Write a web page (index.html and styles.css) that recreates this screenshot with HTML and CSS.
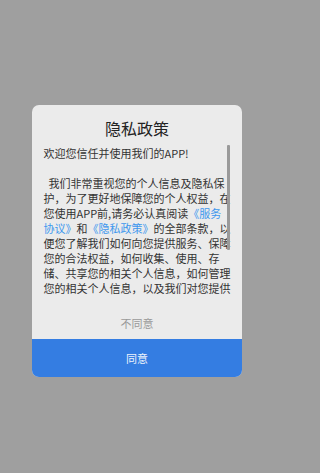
FILE: index.html
```html
<!DOCTYPE html>
<html lang="zh-CN">
<head>
<meta charset="utf-8">
<title>隐私政策</title>
<link rel="stylesheet" href="styles.css">
</head>
<body>
<div class="dialog">
  <h1 class="dialog-title">隐私政策</h1>
  <div class="dialog-body">
    <div class="scroll-content">
      <p class="welcome">欢迎您信任并使用我们的APP!</p>
      <p class="policy">我们非常重视您的个人信息及隐私保护，为了更好地保障您的个人权益，在您使用APP前,请务必认真阅读<a class="link">《服务协议》</a>和<a class="link">《隐私政策》</a>的全部条款，以便您了解我们如何向您提供服务、保障您的合法权益，如何收集、使用、存储、共享您的相关个人信息，如何管理您的相关个人信息，以及我们对您提供的相关信息的保护方式等内容。您点击“同意”即表示您已阅读并同意上述协议的全部内容。</p>
    </div>
    <div class="scroll-thumb"></div>
  </div>
  <div class="decline">不同意</div>
  <div class="agree">同意</div>
</div>
</body>
</html>
```

FILE: styles.css
```css
html, body {
  margin: 0;
  padding: 0;
}

body {
  width: 270px;
  height: 473px;
  background: #9f9f9f;
  font-family: "Noto Sans CJK SC", "Noto Sans", sans-serif;
  color: #333333;
  padding-top: 105px;
  box-sizing: border-box;
  overflow: hidden;
}

.dialog {
  width: 210px;
  margin-left: 32px;
  background: #ebebeb;
  border-radius: 7px;
  overflow: hidden;
  display: flex;
  flex-direction: column;
}

.dialog-title {
  margin: 0;
  padding-top: 12px;
  padding-bottom: 6px;
  font-size: 16px;
  line-height: 22px;
  font-weight: normal;
  text-align: center;
  color: #222222;
}

.dialog-body {
  position: relative;
  height: 152px;
  overflow: hidden;
}

.scroll-content {
  padding: 1px 10px 0 11.5px;
  font-size: 11px;
  line-height: 15px;
}

.scroll-content p {
  margin: 0;
}

.welcome {
  margin-bottom: 15px !important;
}

.policy {
  text-indent: 5px;
}

.link {
  color: #3d97ee;
  text-decoration: none;
}

.scroll-thumb {
  position: absolute;
  top: 0;
  right: 12px;
  width: 3px;
  height: 105px;
  background: #9a9a9a;
  border-radius: 1px;
}

.decline {
  padding-top: 19px;
  padding-bottom: 8px;
  font-size: 11px;
  line-height: 15px;
  text-align: center;
  color: #9a9a9a;
}

.agree {
  height: 38px;
  line-height: 38px;
  background: #347de2;
  color: #eef3fb;
  font-size: 11px;
  text-align: center;
}
```
